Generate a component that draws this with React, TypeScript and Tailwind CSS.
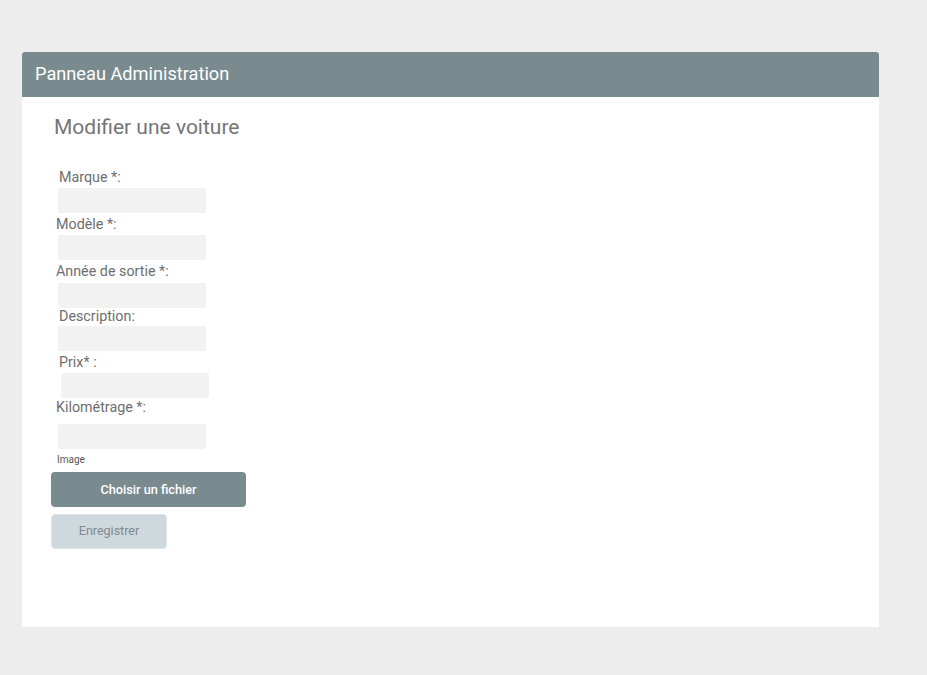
import React from "react";

const font = { fontFamily: "Roboto, 'Liberation Sans', sans-serif" };

const labelCls = "text-[14.3px] leading-[16px] text-[#6e6e6e]";
const inputCls = "h-[25px] w-[148px] rounded-[2px] bg-[#f2f2f2] outline-none";

export default function App() {
  return (
    <div className="min-h-[675px] w-full bg-[#ededed] pt-[52px] pl-[22px]" style={font}>
      <div className="w-[857px]">
        <div className="h-[45px] rounded-t-[3px] bg-[#7a8b8f] pl-[13px] flex items-center">
          <span className="text-[18.2px] text-white leading-none">Panneau Administration</span>
        </div>
        <div className="h-[530px] bg-white pt-[18px] pl-[32px]">
          <h1 className="text-[21px] leading-[24px] text-[#757575]">Modifier une voiture</h1>
          <form className="flex flex-col items-start" onSubmit={(e) => e.preventDefault()}>
            <label className={`mt-[30px] ml-[5px] ${labelCls}`}>Marque *:</label>
            <input className={`mt-[3px] ml-[4px] ${inputCls}`} />
            <label className={`mt-[3px] ml-[2px] ${labelCls}`}>Modèle *:</label>
            <input className={`mt-[3px] ml-[4px] ${inputCls}`} />
            <label className={`mt-[3px] ml-[2px] ${labelCls}`}>Année de sortie *:</label>
            <input className={`mt-[4px] ml-[4px] ${inputCls}`} />
            <label className={`mt-0 ml-[5px] ${labelCls}`}>Description:</label>
            <input className={`mt-[2px] ml-[4px] ${inputCls}`} />
            <label className={`mt-[3px] ml-[5px] ${labelCls}`}>Prix* :</label>
            <input className={`mt-[3px] ml-[7px] ${inputCls}`} />
            <label className={`mt-[1px] ml-[2px] ${labelCls}`}>Kilométrage *:</label>
            <input className={`mt-[9px] ml-[4px] ${inputCls}`} />
            <label className="mt-[5px] ml-[3px] text-[10px] leading-[11px] text-[#555]">Image</label>
            <button
              type="button"
              className="mt-[7px] -ml-[3px] h-[35px] w-[195px] rounded-[4px] bg-[#7a8b8f] text-[12.7px] font-medium text-white"
            >
              Choisir un fichier
            </button>
            <button
              type="submit"
              className="mt-[7px] -ml-[3px] h-[35px] w-[116px] rounded-[4px] border border-[#dde3e6] bg-[#cfd8dc] text-[12.5px] text-[#7d8a8f]"
            >
              Enregistrer
            </button>
          </form>
        </div>
      </div>
    </div>
  );
}
